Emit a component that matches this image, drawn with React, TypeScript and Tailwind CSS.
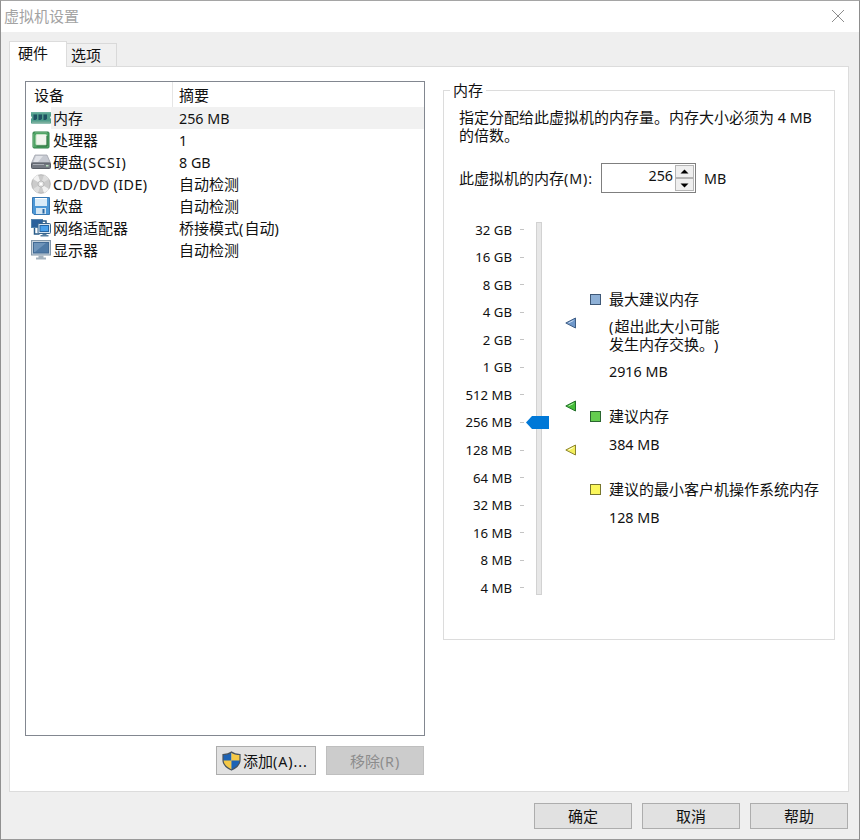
import React from "react";

const LATIN = /([\x20-\x7e]+)/;

function tracking(run: string) {
  if (run === "(" || run === ")") return "tracking-[1.2px]";
  if (run.length > 10) return "tracking-[0.4px]";
  if (run.includes("(")) return "tracking-[0.9px]";
  return "tracking-normal";
}

/* Mixed text: Latin runs are set slightly smaller than the Chinese glyphs. */
function T({ s }: { s: string }) {
  return (
    <>
      {s.split(LATIN).map((part, i) =>
        part === "" ? null : LATIN.test(part) ? (
          <span key={i} className={"text-[14.3px] leading-[0] whitespace-pre " + tracking(part)}>{part}</span>
        ) : (
          <span key={i}>{part}</span>
        )
      )}
    </>
  );
}

const MemoryIcon = () => (
  <svg width="20" height="20" viewBox="0 0 20 20">
    <path d="M0 4h20v4l-1 1.500 1 1.500v4.500H0V11l1-1.500L0 8z" fill="#4f9d8b" />
    <path d="M0 4h20v1.500H0z" fill="#6db09f" />
    <path d="M2.500 6.500h3.500v4.500l-1.500 1H2.500zM7.500 6.500H11v4.500l-1.500 1H7.500zM12.500 6.500H16v4.500l-1.500 1h-2z" fill="#1f5263" />
    <path d="M1 13.500h18v2H1z" fill="#79ae9c" />
  </svg>
);
const CpuIcon = () => (
  <svg width="20" height="20" viewBox="0 0 20 20">
    <rect x="2" y="2" width="16" height="16" rx="1" fill="#4fa565" stroke="#2f7f47" />
    <path d="M2 4v13M4 2h12" stroke="#87c094" />
    <rect x="5" y="4.500" width="10.500" height="10.500" rx="1" fill="#f1f5ed" stroke="#c5e2c4" />
    <path d="M5.500 16h10.500V6" fill="none" stroke="#2a6b3d" />
  </svg>
);
const DiskIcon = () => (
  <svg width="20" height="20" viewBox="0 0 20 20">
    <path d="M4 3h12l3.500 8H.5z" fill="#c6c9d1" stroke="#a1a4ad" strokeWidth=".8" />
    <path d="M5 4h7L7 10H2.500z" fill="#e1e3e8" />
    <rect x=".5" y="11" width="19" height="5.500" rx="1" fill="#747982" stroke="#555a63" />
    <path d="M2 12.500h11" stroke="#a9adb5" />
    <rect x="15" y="13" width="2.500" height="1.500" fill="#b8dfbd" />
  </svg>
);
const DiscIcon = () => (
  <svg width="20" height="20" viewBox="0 0 20 20">
    <circle cx="10" cy="10" r="9.300" fill="#cbcbcb" stroke="#aaa" strokeWidth=".8" />
    <path d="M10 10 2 5a9.300 9.300 0 0 1 5-4zM10 10l8 5a9.300 9.300 0 0 1-5 4z" fill="#f2f2f2" />
    <path d="M10 10 13 1a9.300 9.300 0 0 1 5 4zM10 10 7 19a9.300 9.300 0 0 1-5-4z" fill="#dedede" />
    <circle cx="10" cy="10" r="3" fill="#e8e8e8" stroke="#aaa" strokeWidth=".7" />
    <circle cx="10" cy="10" r="1.200" fill="#fff" />
  </svg>
);
const FloppyIcon = () => (
  <svg width="20" height="20" viewBox="0 0 20 20">
    <path d="M1.500 1.500h17v17H3l-1.500-1.500z" fill="#4c97d6" stroke="#3878b3" />
    <rect x="4" y="2" width="12" height="8" fill="#d9ebf8" />
    <path d="M4 2.500h12" stroke="#fff" />
    <rect x="5" y="12" width="10" height="6" fill="#d4e6f3" />
    <rect x="11.500" y="13" width="2" height="4.500" fill="#2969a5" />
  </svg>
);
const NetworkIcon = () => (
  <svg width="20" height="20" viewBox="0 0 20 20">
    <rect x=".5" y="1.500" width="11" height="8" fill="#2b609b" stroke="#5383ad" />
    <path d="M3.500 10v6h5M11 3h4v3" fill="none" stroke="#285b88" strokeWidth="1.500" />
    <rect x="7" y="5.500" width="12.500" height="10" rx="1" fill="#d8e5ef" stroke="#36648e" />
    <rect x="9" y="7.500" width="8.500" height="6" fill="#4aa0ea" stroke="#2465a5" />
    <path d="M11.500 16h4v1h2v1.500h-8V17h2z" fill="#547da0" />
  </svg>
);
const DisplayIcon = () => (
  <svg width="20" height="20" viewBox="0 0 20 20">
    <rect x=".5" y=".5" width="19" height="14.500" fill="#c4d1dc" stroke="#8498aa" />
    <rect x="2.500" y="2.500" width="15" height="10.500" fill="#4f7aa6" stroke="#426a94" />
    <path d="M3 3h12L4 12H3z" fill="#6e94ba" />
    <path d="M7.500 15.500h5v2h2.500v2H5v-2h2.500z" fill="#a3b1bd" />
  </svg>
);

const devices = [
  { icon: <MemoryIcon />, name: "内存", info: "256 MB", selected: true },
  { icon: <CpuIcon />, name: "处理器", info: "1" },
  { icon: <DiskIcon />, name: "硬盘(SCSI)", info: "8 GB" },
  { icon: <DiscIcon />, name: "CD/DVD (IDE)", info: "自动检测" },
  { icon: <FloppyIcon />, name: "软盘", info: "自动检测" },
  { icon: <NetworkIcon />, name: "网络适配器", info: "桥接模式(自动)" },
  { icon: <DisplayIcon />, name: "显示器", info: "自动检测" },
];

const scale = ["32 GB", "16 GB", "8 GB", "4 GB", "2 GB", "1 GB", "512 MB", "256 MB", "128 MB", "64 MB", "32 MB", "16 MB", "8 MB", "4 MB"];

function Marker({ fill, stroke, light }: { fill: string; stroke: string; light: string }) {
  return (
    <svg width="12" height="12" viewBox="0 0 12 12" className="block">
      <path d="M.8 6 10.500 1v10z" fill={fill} stroke={stroke} />
      <path d="M3.500 6 8.500 3.500" stroke={light} />
    </svg>
  );
}

function Swatch({ children, className }: { children: string; className: string }) {
  return (
    <div className="flex h-[18px] items-center">
      <span className={"mr-[8px] h-[11px] w-[11px] border " + className} />
      <T s={children} />
    </div>
  );
}

function Shield() {
  return (
    <svg width="19" height="20" viewBox="0 0 19 20" className="block">
      <path d="M9.500 1C7 3 4 3.500 1 3.500V9c0 5 4 8 8.500 10z" fill="#1d63b5" />
      <path d="M9.500 1C12 3 15 3.500 18 3.500V9c0 5-4 8-8.500 10z" fill="#f5c947" />
      <path d="M1 9.500h8.500V19C5 17 1.200 14 1 9.500z" fill="#f5c947" />
      <path d="M18 9.500H9.500V19c4.500-2 8.300-5 8.500-9.500z" fill="#1d63b5" />
      <path d="M9.500 1C12 3 15 3.500 18 3.500V9c0 5-4 8-8.500 10C5 17 1 14 1 9V3.500C4 3.500 7 3 9.500 1z" fill="none" stroke="#4a5560" strokeWidth="1.200" />
    </svg>
  );
}

export default function App() {
  return (
    <div className="flex h-[840px] w-[860px] flex-col border border-t-[#a5a5a5] border-r-[#8d8d8d] border-b-[#999] border-l-[#909090] bg-[#efefef] font-['Noto_Sans','Noto_Sans_CJK_SC',sans-serif] text-[15px] leading-[18px] font-normal whitespace-nowrap text-[#111] [text-spacing-trim:space-all]">
      <header className="flex h-[31px] shrink-0 items-center justify-between bg-white pr-[14px] pb-[2px] pl-[3px] text-[#a3a3a3]">
        <span>虚拟机设置</span>
        <svg width="14" height="14" viewBox="0 0 14 14">
          <path d="M1 1l12 12M13 1 1 13" stroke="#8c8c8c" fill="none" />
        </svg>
      </header>

      <nav className="mt-[9px] ml-[8px] flex h-[25px] shrink-0 items-end">
        <div className="z-10 -mb-px flex h-[26px] w-[58px] items-center border border-b-0 border-[#dcdcdc] bg-white pb-[3px] pl-[8px]">硬件</div>
        <div className="flex h-[23px] w-[50px] items-center border border-b-0 border-l-0 border-[#d9d9d9] bg-[#f0f0f0] pl-[4px]">选项</div>
      </nav>

      <main className="ml-[8px] flex h-[726px] w-[840px] shrink-0 border border-[#dcdcdc] bg-white pt-[14px] pl-[15px]">
        <section className="flex w-[400px] shrink-0 flex-col">
          <div className="h-[655px] border border-[#828790] bg-white">
            <div className="flex h-[25px] items-center">
              <span className="flex h-full w-[147px] items-center border-r border-[#e5e5e5] pl-[8px]">设备</span>
              <span className="pl-[6px]">摘要</span>
            </div>
            {devices.map((d) => (
              <div key={d.name} className="flex h-[22px] items-center pl-[5px]">
                <span className="w-[20px] shrink-0">{d.icon}</span>
                <div className={"flex h-full flex-1 items-center pl-[2px] " + (d.selected ? "bg-[#f1f1f1]" : "")}>
                  <span className="w-[126px]"><T s={d.name} /></span>
                  <span><T s={d.info} /></span>
                </div>
              </div>
            ))}
          </div>
          <div className="mt-[10px] flex justify-end gap-[10px] pr-px">
            <button className="flex h-[29px] w-[100px] items-center border border-[#adadad] bg-[#e1e1e1] pl-[5px]">
              <Shield />
              <span className="ml-[2px]">
                添加<span className="text-[14.3px] leading-[0] tracking-[0.9px]">(A)...</span>
              </span>
            </button>
            <button className="h-[29px] w-[98px] border border-[#bfbfbf] bg-[#cccccc] text-[#8c8c8c]"><T s="移除(R)" /></button>
          </div>
        </section>

        <section className="mt-[9px] ml-[18px] flex h-[550px] w-[392px] flex-col border border-[#dcdcdc]">
          <div className="-mt-[10px] ml-[6px] h-[18px] self-start bg-white px-[3px]">内存</div>
          <p className="mt-[9px] ml-[15px]">
            <T s="指定分配给此虚拟机的内存量。内存大小必须为 4 MB" /><br />的倍数。
          </p>
          <div className="mt-[19px] ml-[15px] flex h-[30px] items-center">
            <span className="w-[142px]"><T s="此虚拟机的内存(M):" /></span>
            <div className="flex h-[30px] w-[95px] border border-[#7f7f7f] bg-white p-px">
              <span className="flex-1 pt-px pr-[2px] text-right"><T s="256" /></span>
              <div className="flex w-[19px] flex-col">
                {["M4.500 7.500 8.500 3.500l4 4z", "M4.500 4.500h8l-4 4z"].map((p) => (
                  <span key={p} className="flex h-[13px] items-center justify-center border border-[#b5b5b5] bg-[#efefef]">
                    <svg width="17" height="11" viewBox="0 0 17 11"><path d={p} fill="#000" /></svg>
                  </span>
                ))}
              </div>
            </div>
            <span className="ml-[8px]"><T s="MB" /></span>
          </div>

          <div className="mt-[23px] flex">
            <div className="h-[386px] w-[80px]">
              {scale.map((label) => (
                <div key={label} className="flex h-[27.54px] items-center">
                  <span className="w-[68px] text-right text-[13.2px]">{label}</span>
                  <span className="ml-[8px] h-px w-[4px] bg-[#c4c4c4]" />
                </div>
              ))}
            </div>
            <div className="relative mt-[6px] ml-[12px] h-[373px] w-[6px] border border-[#d2d2d2] bg-[#e7e7e7]">
              <svg width="23" height="13" viewBox="0 0 23 13" className="absolute top-[193px] -left-[11px]">
                <path d="M0 6.500 6 0h17v13H6z" fill="#0078d7" />
              </svg>
            </div>
            <div className="ml-[23px] flex w-[25px] flex-col pt-[101px]">
              <Marker fill="#7099cb" stroke="#405f86" light="#c5d9f0" />
              <div className="mt-[71px]"><Marker fill="#45bd38" stroke="#23722a" light="#b4ecac" /></div>
              <div className="mt-[32px]"><Marker fill="#f3ef5b" stroke="#8c8430" light="#ffffd8" /></div>
            </div>
            <div className="pt-[74px]">
              <Swatch className="border-[#3e5877] bg-[#8eb0d6]">最大建议内存</Swatch>
              <div className="mt-[9px] ml-[19px]"><T s="(超出此大小可能" /></div>
              <div className="ml-[19px]"><T s="发生内存交换。)" /></div>
              <div className="mt-[9px] ml-[19px]"><T s="2916 MB" /></div>
              <div className="mt-[27px]"><Swatch className="border-[#2b6630] bg-[#65cd50]">建议内存</Swatch></div>
              <div className="mt-[10px] ml-[19px]"><T s="384 MB" /></div>
              <div className="mt-[27px]"><Swatch className="border-[#77762e] bg-[#fbf75b]">建议的最小客户机操作系统内存</Swatch></div>
              <div className="mt-[10px] ml-[19px]"><T s="128 MB" /></div>
            </div>
          </div>
        </section>
      </main>

      <footer className="mt-[11px] flex justify-end gap-[10px] pr-[11px]">
        {["确定", "取消", "帮助"].map((label) => (
          <button key={label} className="h-[26px] w-[98px] border border-[#adadad] bg-[#e1e1e1]">{label}</button>
        ))}
      </footer>
    </div>
  );
}
